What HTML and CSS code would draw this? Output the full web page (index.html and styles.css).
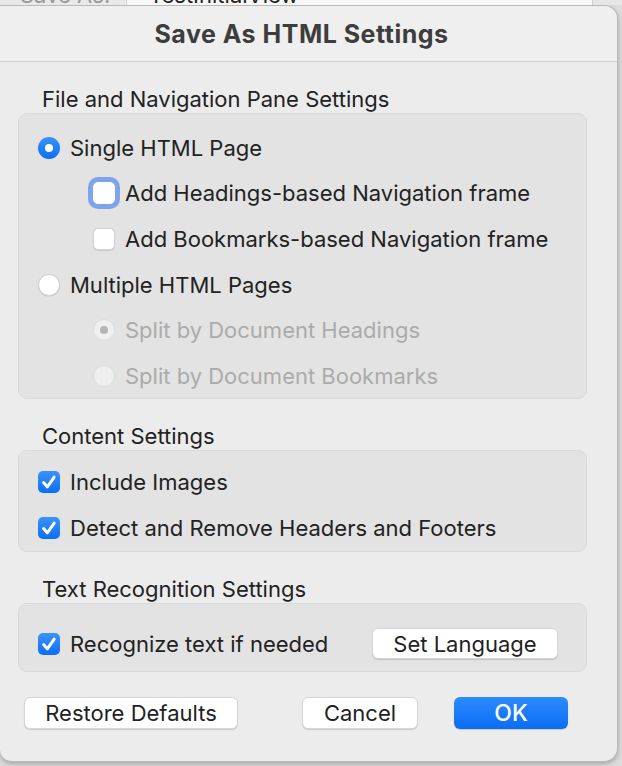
FILE: index.html
```html
<!DOCTYPE html>
<html>
<head>
<meta charset="utf-8">
<link rel="stylesheet" href="styles.css">
</head>
<body>
<div class="screen">
  <div class="parent">
    <div class="parent-label">Save As:</div>
    <div class="parent-field">TestInitialView</div>
    <div class="parent-rest"></div>
  </div>
  <div class="sheet">
    <div class="titlebar">Save As HTML Settings</div>
    <div class="content">
      <div class="section-label first">File and Navigation Pane Settings</div>
      <div class="group group-nav">
        <div class="row"><span class="radio on"></span><span class="label">Single HTML Page</span></div>
        <div class="row indent"><span class="check focus"></span><span class="label">Add Headings-based Navigation frame</span></div>
        <div class="row indent"><span class="check"></span><span class="label">Add Bookmarks-based Navigation frame</span></div>
        <div class="row"><span class="radio"></span><span class="label">Multiple HTML Pages</span></div>
        <div class="row indent disabled"><span class="radio dis dot"></span><span class="label">Split by Document Headings</span></div>
        <div class="row indent disabled"><span class="radio dis"></span><span class="label">Split by Document Bookmarks</span></div>
      </div>

      <div class="section-label">Content Settings</div>
      <div class="group group-content">
        <div class="row"><span class="check on"><svg viewBox="0 0 22 22"><path d="M5.6 11.6 L9.3 15.8 L16.2 6.2"/></svg></span><span class="label">Include Images</span></div>
        <div class="row"><span class="check on"><svg viewBox="0 0 22 22"><path d="M5.6 11.6 L9.3 15.8 L16.2 6.2"/></svg></span><span class="label">Detect and Remove Headers and Footers</span></div>
      </div>

      <div class="section-label">Text Recognition Settings</div>
      <div class="group group-ocr">
        <div class="row"><span class="check on"><svg viewBox="0 0 22 22"><path d="M5.6 11.6 L9.3 15.8 L16.2 6.2"/></svg></span><span class="label">Recognize text if needed</span>
          <button class="btn btn-lang">Set Language</button>
        </div>
      </div>

      <div class="footer">
        <button class="btn btn-restore">Restore Defaults</button>
        <button class="btn btn-cancel">Cancel</button>
        <button class="btn btn-ok">OK</button>
      </div>
    </div>
  </div>
</div>
</body>
</html>
```
FILE: styles.css
```css
* { box-sizing: border-box; }
html, body { margin: 0; padding: 0; }
body {
  font-family: Inter, "Liberation Sans", sans-serif;
  color: #222;
}
.screen {
  width: 622px;
  height: 766px;
  overflow: hidden;
  background: #dcdcdc;
}
.parent {
  display: flex;
  height: 5px;
  overflow: hidden;
  background: #f3f3f3;
}
.parent-label {
  width: 127px;
  padding-left: 20px;
  margin-top: -17px;
  font-size: 22px;
  line-height: 24px;
  color: #9a9a9a;
  background: #e9e9e9;
  border-right: 1px solid #d4d4d4;
}
.parent-field {
  width: 466px;
  padding-left: 22px;
  margin-top: -17px;
  font-size: 22px;
  line-height: 24px;
  color: #222;
  background: #f7f7f7;
  border-right: 1px solid #d0d0d0;
}
.parent-rest { flex: 1; background: #e6e6e6; }

.sheet {
  width: 618px;
  height: 757px;
  background: #ececec;
  border-radius: 0 14px 14px 12px;
  border: 1px solid #b9b9b9;
  border-left: none;
  box-shadow: 0 2px 5px rgba(0,0,0,0.25);
  overflow: hidden;
}
.titlebar {
  height: 56px;
  border-bottom: 1px solid #cfcfcf;
  background: #efefef;
  display: flex;
  align-items: center;
  justify-content: center;
  padding-right: 14px;
  padding-top: 1px;
  font-size: 25px;
  letter-spacing: 0.5px;
  font-weight: 700;
  color: #3d3d3d;
}
.content {
  padding: 0 0 0 18px;
}
.section-label {
  height: 51px;
  padding: 23px 0 0 24px;
  font-size: 22px;
  line-height: 28px;
  color: #222;
}
.group {
  width: 569px;
  background: #e3e3e3;
  border: 1px solid #dadada;
  border-radius: 9px;
  padding-left: 19px;
}
.group-nav { height: 286px; padding-top: 11px; }
.group-content { height: 102px; padding-top: 8px; }
.group-ocr { height: 69px; padding-top: 17px; padding-right: 28px; }
.row {
  display: flex;
  align-items: center;
  height: 45.6px;
  font-size: 22px;
}
.group-content .row { height: 46px; }
.row.indent { padding-left: 55px; }
.row .label { margin-left: 10px; }
.row.disabled { color: #ababab; }

.check, .radio {
  flex: none;
  width: 22px;
  height: 22px;
  display: flex;
  align-items: center;
  justify-content: center;
}
.check {
  border-radius: 5px;
  background: #fff;
  border: 1px solid #d3d3d3;
  box-shadow: 0 0.5px 1px rgba(0,0,0,0.12);
}
.check.focus {
  border-color: #fff;
  box-shadow: 0 0 0 5px #7ea5ec;
}
.check.on {
  background: linear-gradient(#3a92fb, #0c6ff4);
  border: none;
  box-shadow: none;
}
.check svg { width: 22px; height: 22px; }
.check svg path {
  fill: none;
  stroke: #fff;
  stroke-width: 3;
  stroke-linecap: round;
  stroke-linejoin: round;
}
.radio {
  border-radius: 50%;
  background: #fff;
  border: 1px solid #cfcfcf;
  box-shadow: 0 0.5px 1px rgba(0,0,0,0.12);
}
.radio.on {
  background: linear-gradient(#3a92fb, #0c6ff4);
  border: none;
  box-shadow: none;
}
.radio.on::after {
  content: "";
  width: 8px;
  height: 8px;
  border-radius: 50%;
  background: #fff;
}
.radio.dis {
  background: #efefef;
  border: 1px solid #dddddd;
  box-shadow: none;
}
.radio.dis.dot::after {
  content: "";
  width: 8px;
  height: 8px;
  border-radius: 50%;
  background: #b4b4b4;
}

.btn {
  font-family: inherit;
  font-size: 22px;
  color: #222;
  background: #fff;
  border: 1px solid #d6d6d6;
  border-radius: 6px;
  box-shadow: 0 1px 1px rgba(0,0,0,0.15);
  height: 32px;
  padding: 0;
  display: flex;
  align-items: center;
  justify-content: center;
}
.btn-lang { margin-left: auto; width: 186px; height: 31px; }
.footer {
  display: flex;
  padding: 25px 49px 0 6px;
}
.btn-restore { width: 214px; }
.btn-cancel { width: 116px; margin-left: auto; }
.btn-ok {
  width: 114px;
  margin-left: 36px;
  color: #fff;
  border: none;
  background: linear-gradient(#2d8bfd, #0a6cf4);
  font-weight: 500;
  font-size: 23px;
}
```
